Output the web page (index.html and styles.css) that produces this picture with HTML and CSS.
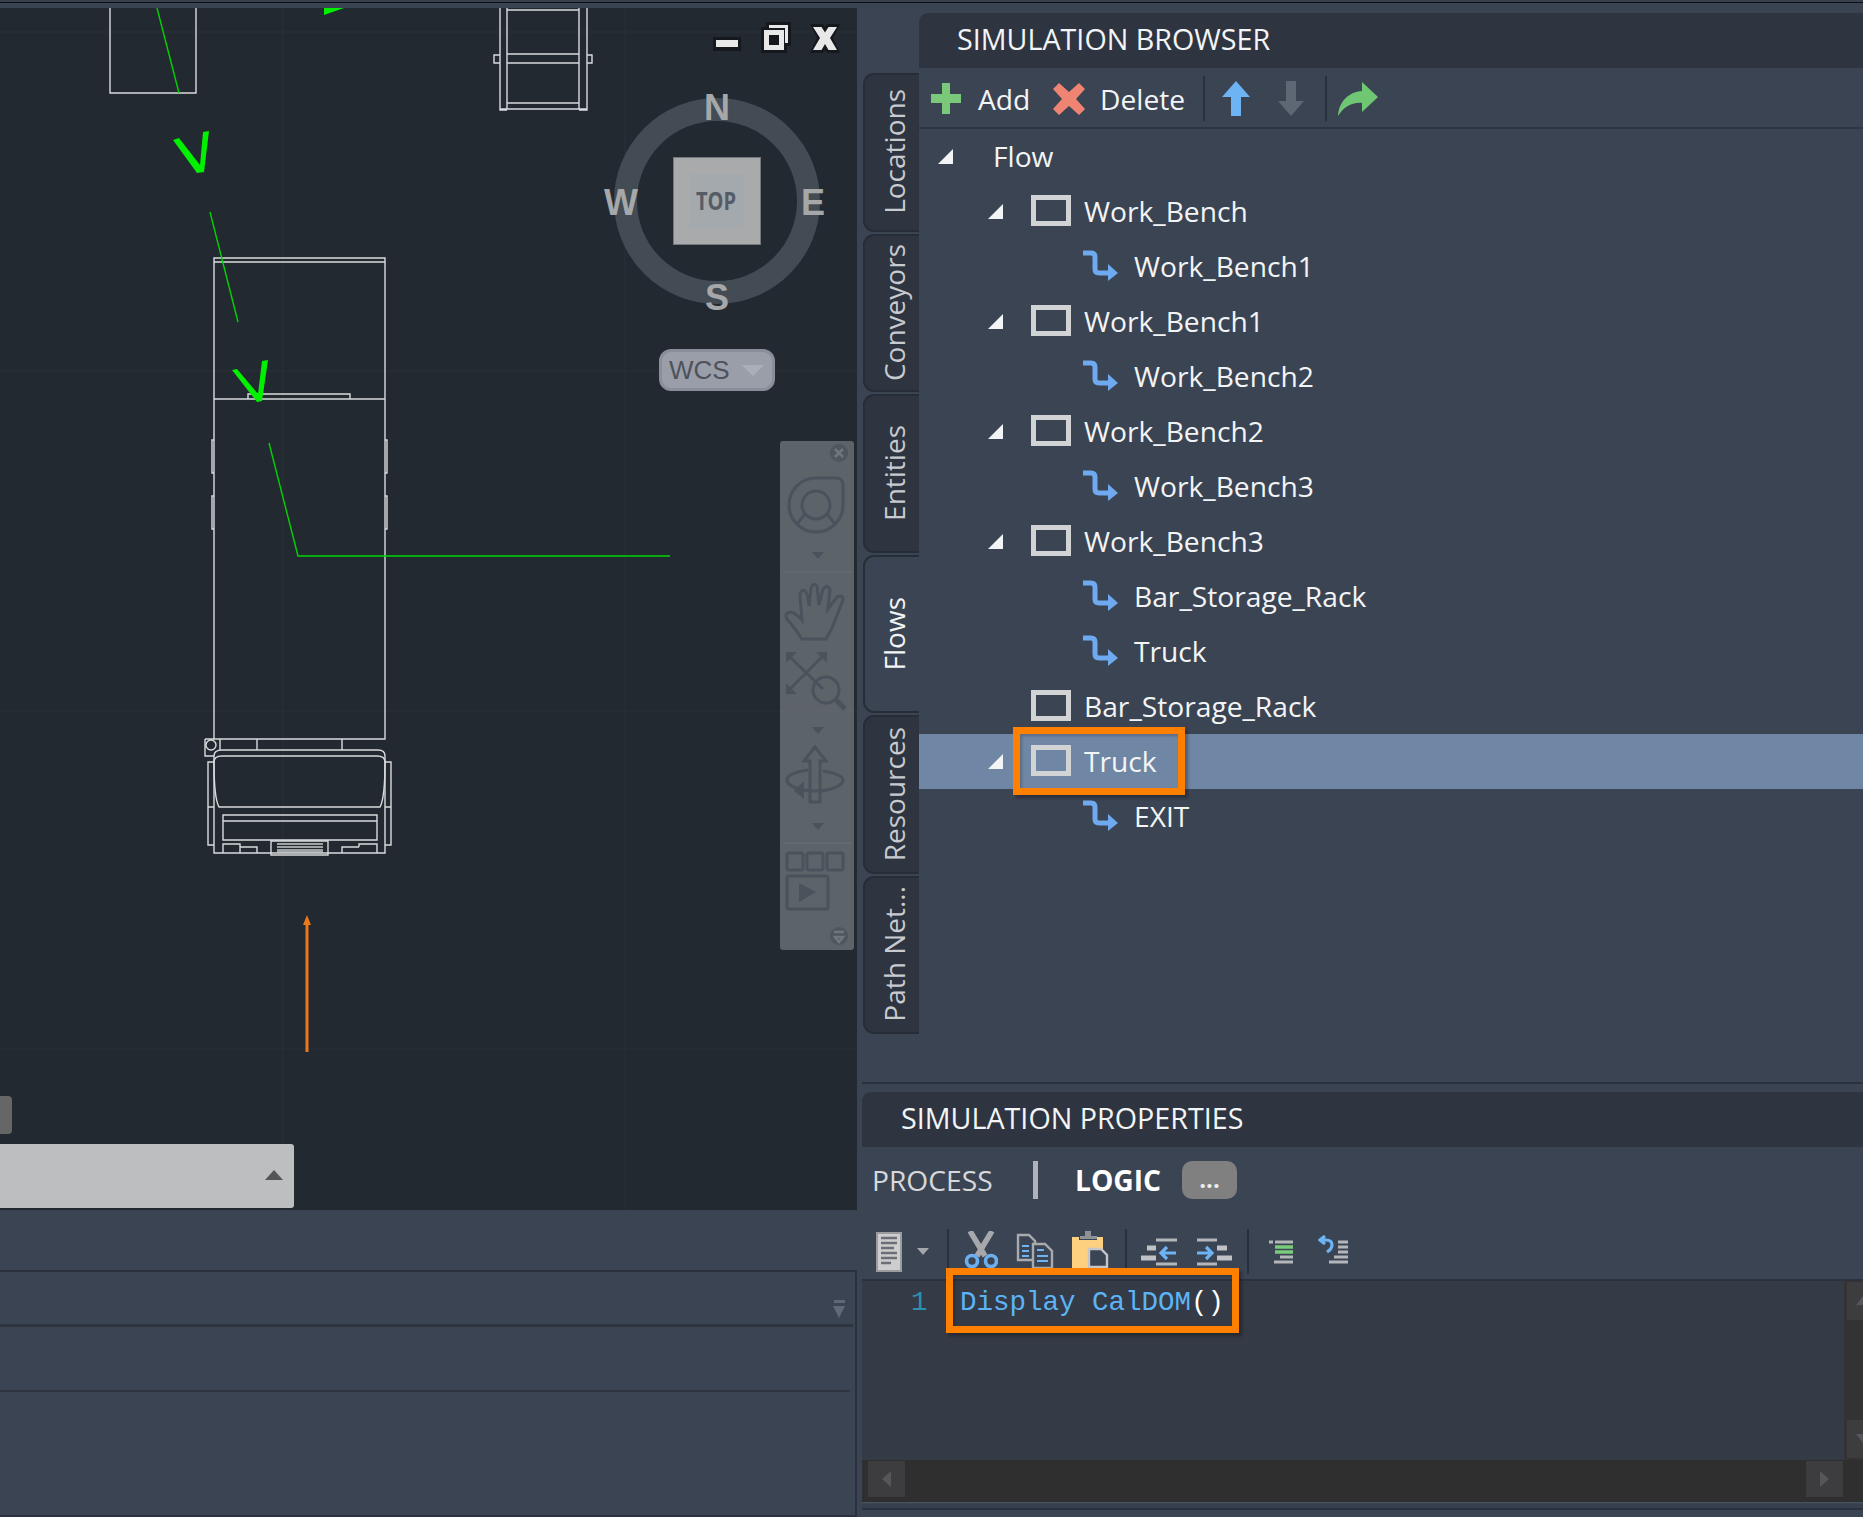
FILE: index.html
```html
<!DOCTYPE html>
<html lang="en">
<head>
<meta charset="utf-8">
<title>Simulation</title>
<link rel="stylesheet" href="styles.css">
</head>
<body>
<div class="topline"></div>
<div class="main">
  <div class="left">
    <div class="viewport">
      <svg class="drawing" viewBox="0 8 857 1202" width="857" height="1202">
        <g class="grid">
          <path d="M283 8V1210M625 8V1210M0 32H857M0 371H857M0 711H857M0 1049H857"/>
        </g>
        <g class="cad">
          <path d="M110 8V93H196V8"/>
          <path d="M500 8V109H587V8M507 8V109M579 8V109M507 10H579M507 54H579M507 63H579M507 103H579M494 55H500V63H494ZM587 55H592V63H587ZM500 102V110H507M579 110H587V102"/>
          <path d="M214 258H385V739H214ZM214 262H385M214 399H385M248 399V394H350V399"/>
          <path d="M214 440H212V473H214M214 496H212V529H214M385 440H387V473H385M385 496H387V529H385"/>
          <path d="M205 739H214M205 739V756H214M220 739V750M257 739V750M342 739V750"/>
          <circle cx="211" cy="745" r="5"/>
          <path d="M214 756Q214 750 222 750H378Q385 750 385 756V853H214Z"/>
          <path d="M214 762Q214 756 222 756H377Q385 756 385 762Q385 798 380 807H219Q214 798 214 762Z"/>
          <path d="M214 762H208V845H214M385 762H391V845H385M214 807H208M385 807H391"/>
          <path d="M223 815H377V840H223ZM223 821H377"/>
          <path d="M271 841H328V855H271Z"/>
          <path d="M223 853V844H240V853M240 847H257V853M342 853V847H359M359 847V844H377V853"/>
          <path class="grille" d="M277 844H323M277 847H323M277 850H323M277 852H323"/>
        </g>
        <g class="green-line">
          <path d="M157 8L179 93"/>
          <path d="M210 212L238 322"/>
          <path d="M269 443L298 556H670"/>
        </g>
        <g class="green-fill">
          <path d="M173 140L179 138L200 165L203 132L209 131L204 172L197 173Z"/>
          <path d="M232 370L237 369L258 394L262 361L268 360L262 401L257 402Z"/>
          <path d="M324 15V8H344Z"/>
        </g>
        <path class="orange-line" d="M307 1052V922"/>
        <path class="orange-fill" d="M307 915L303 925H311Z"/>
      </svg>

      <div class="win-controls">
        <svg width="30" height="16" viewBox="0 0 30 16"><rect class="wc-out" x="1" y="1" width="28" height="14"/><rect class="wc-in" x="4" y="4" width="22" height="7"/></svg>
        <svg width="30" height="31" viewBox="0 0 30 31"><path class="wc-out" d="M5 0H30V24H26V31H0V5H5Z"/><path class="wc-in" d="M3 8H23V28H3ZM8 3H27V21H24V6H8Z"/><rect class="wc-out" x="8" y="13" width="10" height="10"/></svg>
        <svg width="30" height="29" viewBox="0 0 30 29"><path class="wc-out" d="M0 0H13L15 3L17 0H30L23 14L30 29H17L15 26L13 29H0L7 14Z"/><path class="wc-in" d="M3 3H11.500L15 8.500L18.500 3H27L20 14L27 26H18.500L15 20L11.500 26H3L10 14Z"/></svg>
      </div>

      <div class="compass">
        <div class="ring"></div>
        <span class="dir dir-n">N</span>
        <span class="dir dir-s">S</span>
        <span class="dir dir-e">E</span>
        <span class="dir dir-w">W</span>
        <div class="cube"><div class="cube-face"><span>TOP</span></div></div>
      </div>
      <div class="wcs"><span>WCS</span><i class="wcs-arrow"></i></div>

      <div class="navbar">
        <svg viewBox="0 0 74 509" width="74" height="509">
          <circle class="nb-disc" cx="59" cy="12" r="9"/>
          <path class="nb-light" d="M55 8L63 16M63 8L55 16"/>
          <path class="nb-icon" d="M36 37H56Q63 37 63 44V64A27 27 0 1 1 36 37Z"/>
          <circle class="nb-icon" cx="36" cy="64" r="14"/>
          <path class="nb-icon" d="M25 73L17 83M47 73L55 83"/>
          <path class="nb-solid" d="M32 111H44L38 118Z"/>
          <path class="nb-sep" d="M3 131H71M3 402H71"/>
          <path class="nb-icon" d="M22 198Q14 186 7 178Q4 172 11 171Q17 173 22 179L20 155Q20 148 25 150Q28 152 29 165L31 147Q33 141 37 145L39 164L43 148Q47 143 50 148L48 168L57 156Q63 153 63 159L52 187L46 198Z"/>
          <path class="nb-icon" d="M11 217L43 248M42 216L9 249"/>
          <path class="nb-solid" d="M6 211H17L6 222ZM47 211V222L36 211ZM6 253V242L17 253Z"/>
          <circle class="nb-icon" cx="46" cy="249" r="13"/>
          <path class="nb-thick" d="M55 258L65 268"/>
          <path class="nb-solid" d="M32 286H44L38 293Z"/>
          <path class="nb-icon" d="M35 306L46 320H40V361H30V320H24Z"/>
          <path class="nb-icon" d="M43 330C55 332 63 335 63 339C63 345 50 350 35 350C20 350 7 345 7 339C7 334 15 331 28 329"/>
          <path class="nb-solid" d="M14 350L24 340V358Z"/>
          <path class="nb-solid" d="M32 382H44L38 389Z"/>
          <rect class="nb-icon" x="7" y="412" width="16" height="17" rx="2"/>
          <rect class="nb-icon" x="27" y="412" width="16" height="17" rx="2"/>
          <rect class="nb-icon" x="47" y="412" width="16" height="17" rx="2"/>
          <rect class="nb-icon" x="7" y="435" width="41" height="33" rx="2"/>
          <path class="nb-solid" d="M19 442L36 451L19 461Z"/>
          <circle class="nb-disc" cx="59" cy="495" r="9"/>
          <path class="nb-light" d="M54 491H64M55 496H63L59 501Z"/>
        </svg>
      </div>

      <div class="stub-tab"></div>
      <div class="cmd-bar"><i class="cmd-arrow"></i></div>
    </div>

    <div class="output">
      <div class="output-row first"><i class="filter-dash"></i><i class="filter-arrow"></i></div>
      <div class="output-row second"></div>
      <div class="output-row third"></div>
    </div>
  </div>

  <div class="right">
    <section class="browser">
      <div class="tabs">
        <div class="tab"><span>Locations</span></div>
        <div class="tab"><span>Conveyors</span></div>
        <div class="tab"><span>Entities</span></div>
        <div class="tab active"><span>Flows</span></div>
        <div class="tab"><span>Resources</span></div>
        <div class="tab"><span>Path Net...</span></div>
      </div>
      <div class="browser-main">
        <h2 class="panel-title browser-title">SIMULATION BROWSER</h2>
        <div class="toolbar">
          <svg class="ti-add" width="30" height="31" viewBox="0 0 30 31"><path class="c-green" d="M11 0H19V11H30V20H19V31H11V20H0V11H11Z"/></svg>
          <span class="tb-label add-label">Add</span>
          <svg class="ti-del" width="32" height="32" viewBox="0 0 32 32"><path class="c-red" d="M6 0L16 9L26 0L32 6L23 16L32 26L26 32L16 23L6 32L0 26L9 16L0 6Z"/></svg>
          <span class="tb-label del-label">Delete</span>
          <i class="tb-sep sep-one"></i>
          <svg class="ti-up" width="28" height="35" viewBox="0 0 28 35"><path class="c-blue" d="M14 0L28 16H19V35H9V16H0Z"/></svg>
          <svg class="ti-down" width="26" height="35" viewBox="0 0 26 35"><path class="c-gray" d="M8 0H18V20H26L13 35L0 20H8Z"/></svg>
          <i class="tb-sep sep-two"></i>
          <svg class="ti-redo" width="40" height="34" viewBox="0 0 40 34"><path class="c-lgreen" d="M24 0L40 15L24 30V21C14 20 6 25 0 34C1 20 10 10 24 9Z"/></svg>
        </div>
        <ul class="tree">
          <li class="row lvl-root"><i class="exp"></i><span>Flow</span></li>
          <li class="row lvl-1"><i class="exp"></i><i class="box"></i><span>Work_Bench</span></li>
          <li class="row lvl-2"><svg class="route" viewBox="0 0 35 32"><path class="route-line" d="M0 4H8Q12 4 12 8V20Q12 24 16 24H27"/><path class="route-head" d="M25 15L35 24L25 32Z"/></svg><span>Work_Bench1</span></li>
          <li class="row lvl-1"><i class="exp"></i><i class="box"></i><span>Work_Bench1</span></li>
          <li class="row lvl-2"><svg class="route" viewBox="0 0 35 32"><path class="route-line" d="M0 4H8Q12 4 12 8V20Q12 24 16 24H27"/><path class="route-head" d="M25 15L35 24L25 32Z"/></svg><span>Work_Bench2</span></li>
          <li class="row lvl-1"><i class="exp"></i><i class="box"></i><span>Work_Bench2</span></li>
          <li class="row lvl-2"><svg class="route" viewBox="0 0 35 32"><path class="route-line" d="M0 4H8Q12 4 12 8V20Q12 24 16 24H27"/><path class="route-head" d="M25 15L35 24L25 32Z"/></svg><span>Work_Bench3</span></li>
          <li class="row lvl-1"><i class="exp"></i><i class="box"></i><span>Work_Bench3</span></li>
          <li class="row lvl-2"><svg class="route" viewBox="0 0 35 32"><path class="route-line" d="M0 4H8Q12 4 12 8V20Q12 24 16 24H27"/><path class="route-head" d="M25 15L35 24L25 32Z"/></svg><span>Bar_Storage_Rack</span></li>
          <li class="row lvl-2"><svg class="route" viewBox="0 0 35 32"><path class="route-line" d="M0 4H8Q12 4 12 8V20Q12 24 16 24H27"/><path class="route-head" d="M25 15L35 24L25 32Z"/></svg><span>Truck</span></li>
          <li class="row lvl-1 no-exp"><i class="box"></i><span>Bar_Storage_Rack</span></li>
          <li class="row lvl-1 selected"><i class="exp"></i><i class="box"></i><span>Truck</span><i class="mark mark-truck"></i></li>
          <li class="row lvl-2"><svg class="route" viewBox="0 0 35 32"><path class="route-line" d="M0 4H8Q12 4 12 8V20Q12 24 16 24H27"/><path class="route-head" d="M25 15L35 24L25 32Z"/></svg><span>EXIT</span></li>
        </ul>
      </div>
    </section>

    <section class="props">
      <h2 class="panel-title props-title">SIMULATION PROPERTIES</h2>
      <div class="mode-row">
        <span class="mode-process">PROCESS</span>
        <i class="mode-sep"></i>
        <span class="mode-logic">LOGIC</span>
        <span class="mode-more">...</span>
      </div>
      <div class="code-tools">
        <svg class="ct-doc" width="26" height="40" viewBox="0 0 26 40"><rect class="ic-paper" x="1" y="1" width="24" height="38"/><path class="ic-lines" d="M5 6H21M5 11H21M5 16H18M5 21H21M5 26H21M5 31H15"/></svg>
        <i class="ct-caret"></i>
        <i class="ct-sep sep-a"></i>
        <svg class="ct-cut" width="34" height="37" viewBox="0 0 34 37"><path class="ic-gray-thick" d="M6 0L21 25M28 0L13 25"/><circle class="ic-blue-ring" cx="8" cy="30" r="5.500"/><circle class="ic-blue-ring" cx="27" cy="30" r="5.500"/></svg>
        <svg class="ct-copy" width="38" height="36" viewBox="0 0 38 36"><path class="ic-outline" d="M2 2H13L19 8V27H2Z"/><path class="ic-outline" d="M17 11H29L36 18V35H17Z"/><path class="ic-blue-lines" d="M6 13H13M6 18H13M6 23H13M21 17H28M21 23H32M21 28H32"/></svg>
        <svg class="ct-paste" width="38" height="37" viewBox="0 0 38 37"><path class="ic-clip" d="M1 6H8V9H26V6H32V37H1Z"/><path class="ic-clip-top" d="M9 8H26V5H20V0H14V5H9Z"/><path class="ic-sheet" d="M18 18H30L36 24V36H18Z"/></svg>
        <i class="ct-sep sep-b"></i>
        <svg class="ct-ind-l" width="36" height="28" viewBox="0 0 36 28"><path class="ic-bars" d="M15 2H36M15 26H36"/><path class="ic-bars blob" d="M6 10H15M0 20H15"/><path class="ic-arrow" d="M35 15H20M26 9L20 15L26 21"/></svg>
        <svg class="ct-ind-r" width="35" height="28" viewBox="0 0 35 28"><path class="ic-bars" d="M0 2H20M0 26H20"/><path class="ic-bars blob" d="M20 10H30M20 20H35"/><path class="ic-arrow" d="M0 15H15M9 9L15 15L9 21"/></svg>
        <i class="ct-sep sep-c"></i>
        <svg class="ct-fmt" width="26" height="24" viewBox="0 0 26 24"><path class="ic-bars thin" d="M1 2H5M7 2H25M12 17H25M6 22H25"/><path class="ic-greenbars" d="M7 7H25M7 12H25"/></svg>
        <svg class="ct-undo" width="32" height="29" viewBox="0 0 32 29"><path class="ic-bars thin" d="M20 7H30M20 12H30M20 17H30M16 22H30M11 27H30"/><path class="ic-arrow" d="M2 5H8Q14 5 14 10Q14 14 9 17M7 1L2 5L7 9"/></svg>
      </div>
      <div class="editor">
        <div class="code-wrap">
          <div class="code-area">
            <span class="line-no">1</span>
            <code class="code-text"><span class="kw">Display CalDOM</span>()</code>
          </div>
          <div class="vscroll">
            <div class="sc-btn"><i class="tri-up"></i></div>
            <div class="sc-btn"><i class="tri-down"></i></div>
          </div>
        </div>
        <div class="hscroll">
          <div class="sc-btn-h"><i class="tri-left"></i></div>
          <div class="sc-btn-h"><i class="tri-right"></i></div>
        </div>
        <i class="mark mark-code"></i>
      </div>
      <div class="props-foot"></div>
    </section>
  </div>
</div>
</body>
</html>
```
FILE: styles.css
```css
* { box-sizing: border-box; }
html, body { margin: 0; padding: 0; }
body {
  width: 1863px; height: 1517px; overflow: hidden;
  background: #3b4453; color: #f2f4f6;
  font-family: "Open Sans", "Noto Sans", sans-serif;
}
i { display: block; font-style: normal; }
h2, ul { margin: 0; padding: 0; font-weight: 400; list-style: none; }

.topline { height: 3px; background: #39414e; border-bottom: 1px solid #0b0d11; }
.main { display: grid; grid-template-columns: 857px 1006px; height: 1514px; }

/* left */
.left { display: flex; flex-direction: column; padding-top: 5px; }
.viewport { position: relative; width: 857px; height: 1202px; background: #222931; overflow: hidden; flex: none; }
.drawing { display: block; }
.grid path { fill: none; stroke: #2a3139; stroke-width: 1; }
.cad path, .cad circle { fill: none; stroke: #d9dbdd; stroke-width: 1.4; }
.cad .grille { stroke: #c9cbcd; stroke-width: 1.6; }
.green-line path { fill: none; stroke: #00d400; stroke-width: 1.4; }
.green-fill path { fill: #00f000; }
.orange-line { fill: none; stroke: #e8791c; stroke-width: 3; }
.orange-fill { fill: #e8791c; }

.win-controls { position: absolute; left: 712px; top: 13px; width: 128px; height: 32px; display: flex; justify-content: space-between; align-items: flex-end; }
.win-controls svg:first-child { margin-bottom: 1px; }
.wc-out { fill: #15181d; }
.wc-in { fill: #e8e8e8; }

.compass { position: absolute; left: 600px; top: 82px; width: 234px; height: 222px; }
.ring { position: absolute; left: 14px; top: 8px; width: 206px; height: 206px; border: 23px solid #434b54; border-radius: 50%; }
.dir { position: absolute; font-family: "Liberation Sans", Arial, sans-serif; font-weight: 700; font-size: 36px; line-height: 36px; color: #a5a7a9; width: 40px; text-align: center; }
.dir-n { left: 97px; top: 0; }
.dir-s { left: 97px; top: 190px; }
.dir-e { left: 193px; top: 95px; }
.dir-w { left: 1px; top: 95px; }
.cube { position: absolute; left: 73px; top: 67px; width: 88px; height: 88px; background: #a9aaab; border: 1.5px solid #74777b; padding: 15.5px; }
.cube-face { width: 54px; height: 54px; background: #a3a9ad; color: #565c66; font-weight: 700; font-size: 25px; line-height: 52px; text-align: center; }
.cube-face span { display: inline-block; transform: scaleX(.8); }

.wcs { position: absolute; left: 659px; top: 341px; width: 116px; height: 42px; background: #9a9ea9; border: 3px solid #8a8e9b; border-radius: 12px; display: flex; align-items: center; padding-left: 7px; color: #4e535b; font-family: "Liberation Sans", Arial, sans-serif; font-size: 26px; }
.wcs-arrow { margin-left: 12px; width: 0; height: 0; border-left: 11px solid transparent; border-right: 11px solid transparent; border-top: 11px solid #abafba; }

.navbar { position: absolute; left: 780px; top: 433px; width: 74px; height: 509px; background: rgba(140,148,152,.55); border-radius: 3px; }
.navbar svg { display: block; }
.nb-disc { fill: #4e565e; }
.nb-light { fill: none; stroke: #6f777d; stroke-width: 2.5; }
.nb-icon { fill: none; stroke: #4a525c; stroke-width: 3; }
.nb-thick { fill: none; stroke: #4a525c; stroke-width: 5; }
.nb-solid { fill: #4a525c; }
.nb-sep { fill: none; stroke: #687077; stroke-width: 1; }

.stub-tab { position: absolute; left: -4px; top: 1088px; width: 16px; height: 38px; background: #666; border-radius: 4px; }
.cmd-bar { position: absolute; left: -4px; top: 1136px; width: 298px; height: 64px; background: #bdbebf; border-radius: 3px; }
.cmd-arrow { position: absolute; right: 11px; top: 26px; width: 0; height: 0; border-left: 9.5px solid transparent; border-right: 9.5px solid transparent; border-bottom: 10px solid #555; }

.output { margin-top: 60px; flex: 1; border-top: 2px solid #2c323d; border-right: 2px solid #2c323d; border-bottom: 2px solid #2c323d; display: flex; flex-direction: column; }
.output-row { position: relative; flex: none; }
.output-row.first { height: 55px; border-bottom: 3px solid #2e3440; margin-right: 2px; }
.output-row.second { height: 65px; border-bottom: 2px solid #2e3440; margin-right: 5px; }
.output-row.third { flex: 1; }
.filter-dash { position: absolute; right: 8px; top: 28px; width: 11px; height: 3px; background: #5f6874; }
.filter-arrow { position: absolute; right: 8px; top: 34px; width: 0; height: 0; border-left: 6px solid transparent; border-right: 6px solid transparent; border-top: 12px solid #5f6874; }

/* right */
.right { display: flex; flex-direction: column; padding-top: 10px; }
.browser { display: flex; height: 1071px; border-bottom: 2px solid #2c323d; margin-left: 5px; flex: none; }
.tabs { width: 57px; padding: 60px 0 0 1px; display: flex; flex-direction: column; gap: 2px; flex: none; }
.tab { height: 158.5px; background: #2e3440; border: 2px solid #272d37; border-right: 0; border-radius: 11px 0 0 11px; display: flex; align-items: center; justify-content: center; flex: none; }
.tab.active { background: #3b4453; }
.tab span { writing-mode: vertical-rl; transform: rotate(180deg); font-size: 28px; line-height: 32px; color: #c7cacf; white-space: nowrap; margin-left: 3px; margin-bottom: 1px; }
.tab.active span { color: #f2f4f6; }

.browser-main { flex: 1; min-width: 0; display: flex; flex-direction: column; }
.panel-title { height: 55px; background: #2e3440; font-size: 28.7px; line-height: 52px; border-radius: 9px 0 0 0; color: #f2f4f6; white-space: nowrap; }
.browser-title { padding-left: 38px; }

.toolbar { height: 61px; border-bottom: 2px solid #2e3440; display: flex; align-items: center; padding: 2px 0 0 12px; flex: none; }
.toolbar svg { display: block; flex: none; }
.tb-label { font-size: 28.2px; line-height: 32px; margin-top: 1px; }
.ti-add { margin-right: 17px; }
.add-label { width: 53px; margin-right: 22px; }
.ti-del { margin-right: 15px; }
.del-label { width: 86px; }
.tb-sep { width: 2px; height: 45px; background: #2a303b; flex: none; }
.sep-one { margin-left: 17px; margin-right: 17px; }
.ti-up { margin-right: 28px; }
.sep-two { margin-left: 21px; margin-right: 11px; }
.c-green { fill: #7ac87a; }
.c-red { fill: #f08472; }
.c-blue { fill: #6eb4f4; }
.c-gray { fill: #5e6773; }
.c-lgreen { fill: #6fc673; }

.tree { flex: 1; }
.row { position: relative; height: 55px; display: flex; align-items: center; font-size: 28.2px; white-space: nowrap; }
.row span { margin-bottom: 2px; }
.row.selected { background: #7086a5; }
.exp { width: 0; height: 0; border-bottom: 15px solid #f2f4f6; border-left: 15px solid transparent; flex: none; }
.lvl-root { padding-left: 19px; }
.lvl-root span { margin-left: 40px; }
.lvl-1 { padding-left: 69px; }
.lvl-1 .box { margin-left: 28px; margin-bottom: 2px; }
.lvl-1.no-exp .box { margin-left: 43px; }
.lvl-1 span { margin-left: 13px; }
.lvl-2 { padding-left: 164px; }
.lvl-2 span { margin-left: 16px; }
.box { width: 40px; height: 31px; border: 5px solid #d2d3d4; flex: none; }
.route { width: 35px; height: 32px; flex: none; display: block; margin-bottom: 4px; }
.route-line { fill: none; stroke: #6fa9f0; stroke-width: 5; }
.route-head { fill: #6fa9f0; }

.mark { position: absolute; border: 7px solid #ff8000; box-shadow: 3px 3px 3px rgba(0,0,0,.3), inset 2px 2px 3px rgba(0,0,0,.2); pointer-events: none; }
.mark-truck { left: 94px; top: -7px; width: 172px; height: 68px; }

.props { flex: none; margin-top: 8px; margin-left: 5px; }
.props-title { padding-left: 39px; }
.mode-row { display: flex; align-items: center; height: 38px; margin-top: 14px; padding-left: 10px; }
.mode-process { font-size: 28.2px; color: #d6d8db; width: 161px; }
.mode-sep { width: 5px; height: 38px; background: #b0b4ba; }
.mode-logic { font-size: 28.2px; font-weight: 700; color: #fff; margin-left: 37px; width: 107px; }
.mode-more { width: 55px; height: 38px; background: #808080; border-radius: 10px; text-align: center; font-size: 24px; line-height: 36px; font-weight: 700; color: #eee; }

.code-tools { height: 45px; margin-top: 30px; margin-bottom: 5px; display: flex; align-items: center; padding-left: 14px; position: relative; }
.code-tools svg { display: block; flex: none; }
.ct-caret { margin-left: 15px; width: 0; height: 0; border-left: 6.5px solid transparent; border-right: 6.5px solid transparent; border-top: 7px solid #a3a6aa; flex: none; }
.ct-sep { width: 2px; height: 45px; background: #2a303b; flex: none; }
.sep-a { margin-left: 18px; margin-right: 15px; }
.ct-cut { margin-right: 18px; margin-bottom: 4px; }
.ct-copy { margin-right: 17px; margin-bottom: 2px; }
.ct-paste { margin-bottom: 4px; margin-right: 1px; }
.sep-b { margin-left: 15px; margin-right: 14px; }
.ct-ind-l { margin-right: 20px; }
.sep-c { margin-left: 15px; margin-right: 19px; }
.ct-fmt { margin-right: 24px; }
.ct-undo { margin-bottom: 4px; }
.ic-paper { fill: #cdcdcd; stroke: #9a9c9f; stroke-width: 2; }
.ic-lines { fill: none; stroke: #6a6f77; stroke-width: 2.6; }
.ic-gray-thick { fill: none; stroke: #a6a8ab; stroke-width: 5.5; }
.ic-blue-ring { fill: none; stroke: #6ab0f0; stroke-width: 3.6; }
.ic-outline { fill: #3b4453; stroke: #a8aaae; stroke-width: 2.4; }
.ic-blue-lines { fill: none; stroke: #6eb4f4; stroke-width: 2.2; }
.ic-clip { fill: #fdd07f; }
.ic-clip-top { fill: #8f9296; }
.ic-sheet { fill: #3b4453; stroke: #c4c6c9; stroke-width: 2.4; }
.ic-bars { fill: none; stroke: #b4b6b9; stroke-width: 3; }
.ic-bars.blob { stroke-width: 5; stroke: #c0c2c5; }
.ic-bars.thin { stroke-width: 3; }
.ic-arrow { fill: none; stroke: #6eb4f4; stroke-width: 3.2; }
.ic-greenbars { fill: none; stroke: #78cc7a; stroke-width: 3.4; }

.editor { position: relative; border-top: 2px solid #2c323d; }
.code-wrap { display: flex; height: 179px; }
.code-area { flex: 1; background: #343a46; display: flex; align-items: flex-start; padding-top: 2px; height: 179px; }
.line-no { width: 98px; padding-left: 49px; font-family: "Liberation Mono", monospace; font-size: 27.5px; line-height: 40px; color: #2b90b0; flex: none; }
.code-text { font-family: "Liberation Mono", monospace; font-size: 27.5px; line-height: 40px; color: #fff; white-space: pre; }
.kw { color: #5cb4f6; }
.vscroll { width: 19px; background: #333; display: flex; flex-direction: column; justify-content: space-between; padding: 1px 0 2px 3px; flex: none; }
.sc-btn { height: 38px; background: #3d3d40; position: relative; }
.tri-up, .tri-down { position: absolute; left: 9px; top: 14px; width: 0; height: 0; border-left: 7px solid transparent; border-right: 7px solid transparent; }
.tri-up { border-bottom: 9px solid #56565a; }
.tri-down { border-top: 9px solid #56565a; }
.hscroll { height: 43px; background: #2f2f2f; display: flex; justify-content: space-between; align-items: center; padding: 0 20px 4px 6px; border-bottom: 1px solid #4a5260; }
.sc-btn-h { width: 37px; height: 36px; background: #3d3d40; display: flex; align-items: center; justify-content: center; }
.tri-left, .tri-right { width: 0; height: 0; border-top: 8px solid transparent; border-bottom: 8px solid transparent; }
.tri-left { border-right: 9px solid #56565a; }
.tri-right { border-left: 9px solid #56565a; }
.mark-code { left: 84px; top: -13px; width: 293px; height: 65px; }
.props-foot { height: 6px; margin-top: 1px; background: #36404f; border-bottom: 2px solid #2c323d; }
```
